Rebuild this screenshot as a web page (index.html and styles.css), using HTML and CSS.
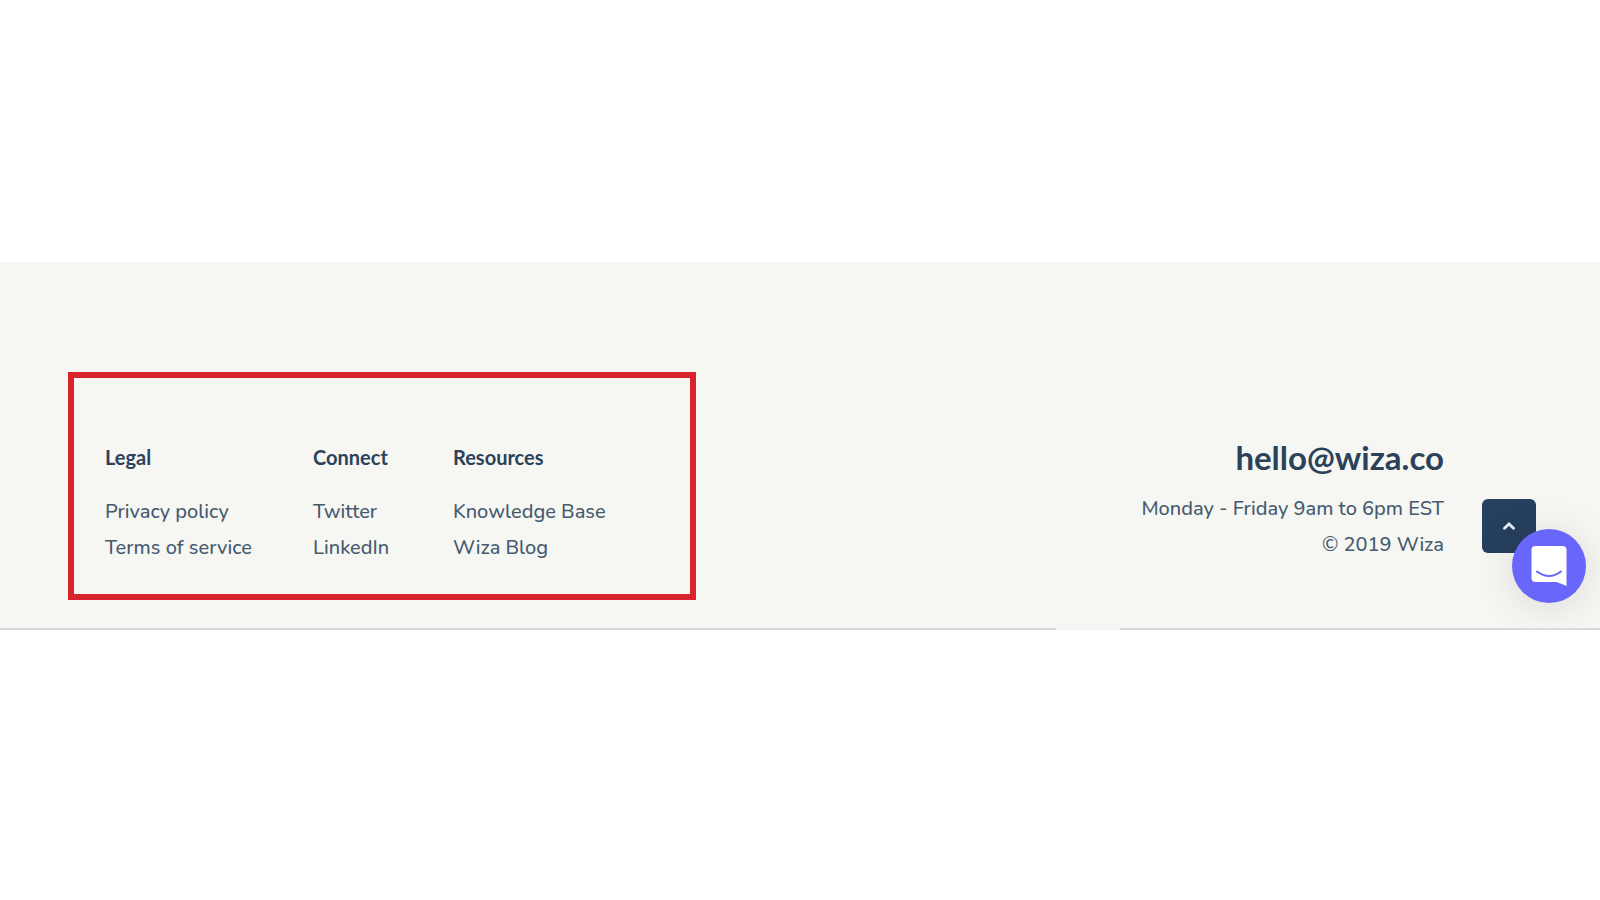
FILE: index.html
```
<!DOCTYPE html>
<html lang="en">

<head>
    <meta charset="utf-8">
    <title>Wiza</title>
    <link rel="stylesheet" href="styles.css">
</head>

<body>
    <footer class="footer">
        <nav class="footer-nav">
            <div class="column">
                <h2>Legal</h2>
                <ul>
                    <li><a href="#">Privacy policy</a></li>
                    <li><a href="#">Terms of service</a></li>
                </ul>
            </div>
            <div class="column">
                <h2>Connect</h2>
                <ul>
                    <li><a href="#">Twitter</a></li>
                    <li><a href="#">LinkedIn</a></li>
                </ul>
            </div>
            <div class="column">
                <h2>Resources</h2>
                <ul>
                    <li><a href="#">Knowledge Base</a></li>
                    <li><a href="#">Wiza Blog</a></li>
                </ul>
            </div>
        </nav>

        <div class="contact">
            <a class="email" href="mailto:hello@wiza.co">hello@wiza.co</a>
            <p>Monday - Friday 9am to 6pm EST</p>
            <p>© 2019 Wiza</p>
        </div>

        <a class="to-top" href="#" aria-label="Back to top">
            <svg width="12" height="8" viewBox="0 0 12 8">
                <path d="M1.5 6.2 L6 2 L10.5 6.2" fill="none" stroke="#e4f0fa" stroke-width="2.8" stroke-linecap="round" stroke-linejoin="miter"/>
            </svg>
        </a>

        <button class="chat" type="button" aria-label="Open chat">
            <svg width="36" height="42" viewBox="0 0 36 42">
                <path d="M4.5 1 H31.5 Q35.5 1 35.5 5 V41 Q30 38.5 25.5 37 H4.5 Q.5 37 .5 33 V5 Q.5 1 4.5 1 Z" fill="#fff"/>
                <path d="M6 26.5 Q18 35.5 30 26.5" fill="none" stroke="#6966fb" stroke-width="2" stroke-linecap="round"/>
            </svg>
        </button>
    </footer>
</body>

</html>
```
FILE: styles.css
```
* {
    box-sizing: border-box;
}

body {
    margin: 0;
    padding-top: 262px;
    background: #fff;
    color: #465a70;
    font-family: "Nunito", "Open Sans", sans-serif;
    font-size: 20px;
    font-weight: 500;
    line-height: 36px;
}

h2,
p,
ul {
    margin: 0;
    padding: 0;
}

ul {
    list-style: none;
}

a {
    color: inherit;
    text-decoration: none;
}

a:hover {
    text-decoration: underline;
}

.footer {
    position: relative;
    display: flex;
    justify-content: space-between;
    align-items: flex-start;
    padding: 110px 156px 30px 68px;
    background: #f6f7f2;
}

/* bottom rule, broken on the right side */
.footer::after {
    content: "";
    position: absolute;
    left: 0;
    right: 0;
    bottom: 0;
    height: 2px;
    background: linear-gradient(to right, #d9dadb 66%, #f5f5f5 66%, #f5f5f5 70%, #d9dadb 70%);
}

.footer-nav {
    display: grid;
    grid-template-columns: 208px 140px auto;
    width: 628px;
    padding: 61px 30px 28px 31px;
    border: 6px solid #d9242c;
}

.column h2 {
    margin-bottom: 19px;
    color: #2c425b;
    font-family: "Lato", sans-serif;
    font-size: 20px;
    font-weight: 700;
}

.contact {
    padding-top: 65px;
    text-align: right;
}

.email {
    display: block;
    margin-bottom: 14px;
    color: #2c425b;
    font-family: "Lato", sans-serif;
    font-size: 33px;
    font-weight: 700;
    line-height: 40px;
}

.to-top {
    position: absolute;
    right: 64px;
    bottom: 77px;
    display: flex;
    align-items: center;
    justify-content: center;
    width: 54px;
    height: 54px;
    border-radius: 6px;
    background: #263f5e;
}

.chat {
    position: absolute;
    right: 14px;
    bottom: 27px;
    display: flex;
    align-items: center;
    justify-content: center;
    width: 74px;
    height: 74px;
    padding: 0;
    border: 0;
    border-radius: 50%;
    background: #6966fb;
    box-shadow: 0 4px 40px rgba(0, 0, 0, 0.12);
    cursor: pointer;
}
```
